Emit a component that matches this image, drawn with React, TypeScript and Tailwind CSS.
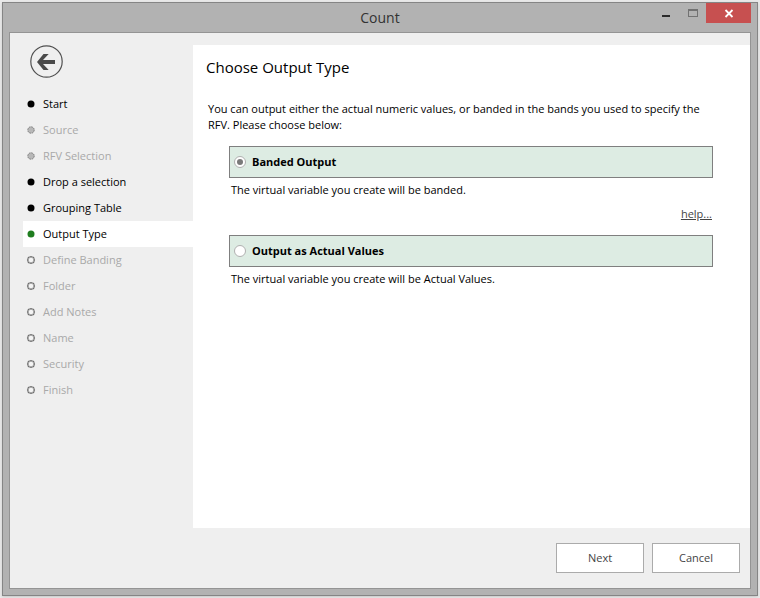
import { useState } from "react";

type StepState = "done" | "skipped" | "current" | "pending";

const steps: { name: string; state: StepState }[] = [
  { name: "Start", state: "done" },
  { name: "Source", state: "skipped" },
  { name: "RFV Selection", state: "skipped" },
  { name: "Drop a selection", state: "done" },
  { name: "Grouping Table", state: "done" },
  { name: "Output Type", state: "current" },
  { name: "Define Banding", state: "pending" },
  { name: "Folder", state: "pending" },
  { name: "Add Notes", state: "pending" },
  { name: "Name", state: "pending" },
  { name: "Security", state: "pending" },
  { name: "Finish", state: "pending" },
];

const rowStyles: Record<StepState, string> = {
  done: "text-black",
  skipped: "text-[#a9a9a9]",
  current: "bg-white text-black",
  pending: "text-[#a9a9a9]",
};

function StepDot({ state }: { state: StepState }) {
  return (
    <svg className="size-4 shrink-0" viewBox="0 0 16 16" aria-hidden="true">
      {state === "done" && <circle cx="8" cy="8" r="3.5" fill="#000" />}
      {state === "current" && <circle cx="8" cy="8" r="3.5" fill="#1f7d1f" />}
      {state === "skipped" && (
        <circle cx="8" cy="8" r="3.2" fill="#b8b8b8" stroke="#7c7c7c" strokeDasharray="1.6 0.9" />
      )}
      {state === "pending" && (
        <>
          <circle cx="8" cy="8" r="3.2" fill="#f4f4f4" stroke="#a0a0a0" strokeWidth="1.8" />
          <path d="M5 5h1v1H5zM10 5h1v1h-1zM5 10h1v1H5zM10 10h1v1h-1z" fill="#6e6e6e" />
          <path d="M7 4h2v1H7zM7 11h2v1H7zM4 7h1v2H4zM11 7h1v2h-1z" fill="#858585" />
        </>
      )}
    </svg>
  );
}

function TitleBar() {
  return (
    <header className="grid h-[29px] grid-cols-[1fr_auto_1fr] items-start">
      <h1 className="col-start-2 text-sm leading-[29px] text-[#333]">Count</h1>
      <div className="flex justify-end">
        <button type="button" aria-label="Minimize" className="h-5 w-[27px]">
          <svg className="h-5 w-[27px]" viewBox="0 0 27 20">
            <path d="M10 12h8v2h-8z" fill="#2b2b2b" />
          </svg>
        </button>
        <button type="button" aria-label="Maximize" className="h-5 w-[27px]">
          <svg className="h-5 w-[27px]" viewBox="0 0 27 20">
            <path d="M9 6h10v8H9zM10 8v5h8V8z" fill="#727272" fillRule="evenodd" />
          </svg>
        </button>
        <button type="button" aria-label="Close" className="h-5 w-[45px] bg-[#c75050]">
          <svg className="h-5 w-[45px]" viewBox="0 0 45 20">
            <path d="M19.5 7l7 7M26.5 7l-7 7" stroke="#fff" strokeWidth="1.8" />
          </svg>
        </button>
      </div>
    </header>
  );
}

type OptionProps = {
  id: string;
  label: string;
  description: string;
  checked: boolean;
  onChange: () => void;
};

function OutputOption({ id, label, description, checked, onChange }: OptionProps) {
  return (
    <div>
      <label
        htmlFor={id}
        className="flex h-8 items-center gap-1.5 border border-[#7f7f7f] bg-[#ddece3] px-1 font-bold"
      >
        <input
          id={id}
          type="radio"
          name="output"
          checked={checked}
          onChange={onChange}
          className="grid size-3 shrink-0 appearance-none place-items-center rounded-full border border-[#b0b0b0] bg-white before:size-1.5 before:rounded-full checked:before:bg-[#7a7a7a]"
        />
        {label}
      </label>
      <p className="mt-1 pl-0.5">{description}</p>
    </div>
  );
}

export default function App() {
  const [output, setOutput] = useState("banded");

  return (
    <div className="flex min-h-screen flex-col bg-[#e9e9e9] p-0.5 font-['Open_Sans','Noto_Sans',sans-serif] text-[11px] leading-4 text-black">
      <div className="flex flex-1 flex-col border border-[#858585] bg-[#b2b2b2] px-1.5 pb-1.5 shadow">
        <TitleBar />
        <div className="flex flex-1 flex-col border border-[#949494] bg-[#efefef]">
          <div className="flex flex-1 pt-3">
            <nav className="w-[183px] shrink-0 pl-[13px]">
              <button type="button" aria-label="Back" className="ml-[7px] block size-[33px]">
                <svg viewBox="0 0 33 33" className="size-[33px]" fill="none">
                  <circle cx="16.5" cy="16.5" r="15.7" stroke="#505050" strokeWidth="1.2" />
                  <path d="M7 17L13.5 9H18.7L13 15H25v4H13l5.7 6H13.5z" fill="#4a4a4a" />
                </svg>
              </button>
              <ol className="mt-[13px]">
                {steps.map((step) => (
                  <li
                    key={step.name}
                    aria-current={step.state === "current" ? "step" : undefined}
                    className={`flex h-[26px] items-center gap-1 ${rowStyles[step.state]}`}
                  >
                    <StepDot state={step.state} />
                    {step.name}
                  </li>
                ))}
              </ol>
            </nav>
            <main className="flex-1 bg-white pt-2.5">
              <h2 className="pl-[13px] text-[15px] leading-6">Choose Output Type</h2>
              <p className="mt-[22px] pr-[30px] pl-[15px]">
                You can output either the actual numeric values, or banded in the bands you used to specify the RFV.
                Please choose below:
              </p>
              <div className="mt-[13px] pr-[37px] pl-9">
                <OutputOption
                  id="banded"
                  label="Banded Output"
                  description="The virtual variable you create will be banded."
                  checked={output === "banded"}
                  onChange={() => setOutput("banded")}
                />
                <div className="mt-2 mb-[13px] pr-px text-right">
                  <a href="#help" className="text-[#444] underline">
                    help...
                  </a>
                </div>
                <OutputOption
                  id="actual"
                  label="Output as Actual Values"
                  description="The virtual variable you create will be Actual Values."
                  checked={output === "actual"}
                  onChange={() => setOutput("actual")}
                />
              </div>
            </main>
          </div>
          <footer className="flex h-[60px] items-center justify-end gap-2 pr-2.5">
            <button type="button" className="h-[30px] w-[88px] border border-[#ababab] bg-white text-[#444]">
              Next
            </button>
            <button type="button" className="h-[30px] w-[88px] border border-[#ababab] bg-white text-[#444]">
              Cancel
            </button>
          </footer>
        </div>
      </div>
    </div>
  );
}
